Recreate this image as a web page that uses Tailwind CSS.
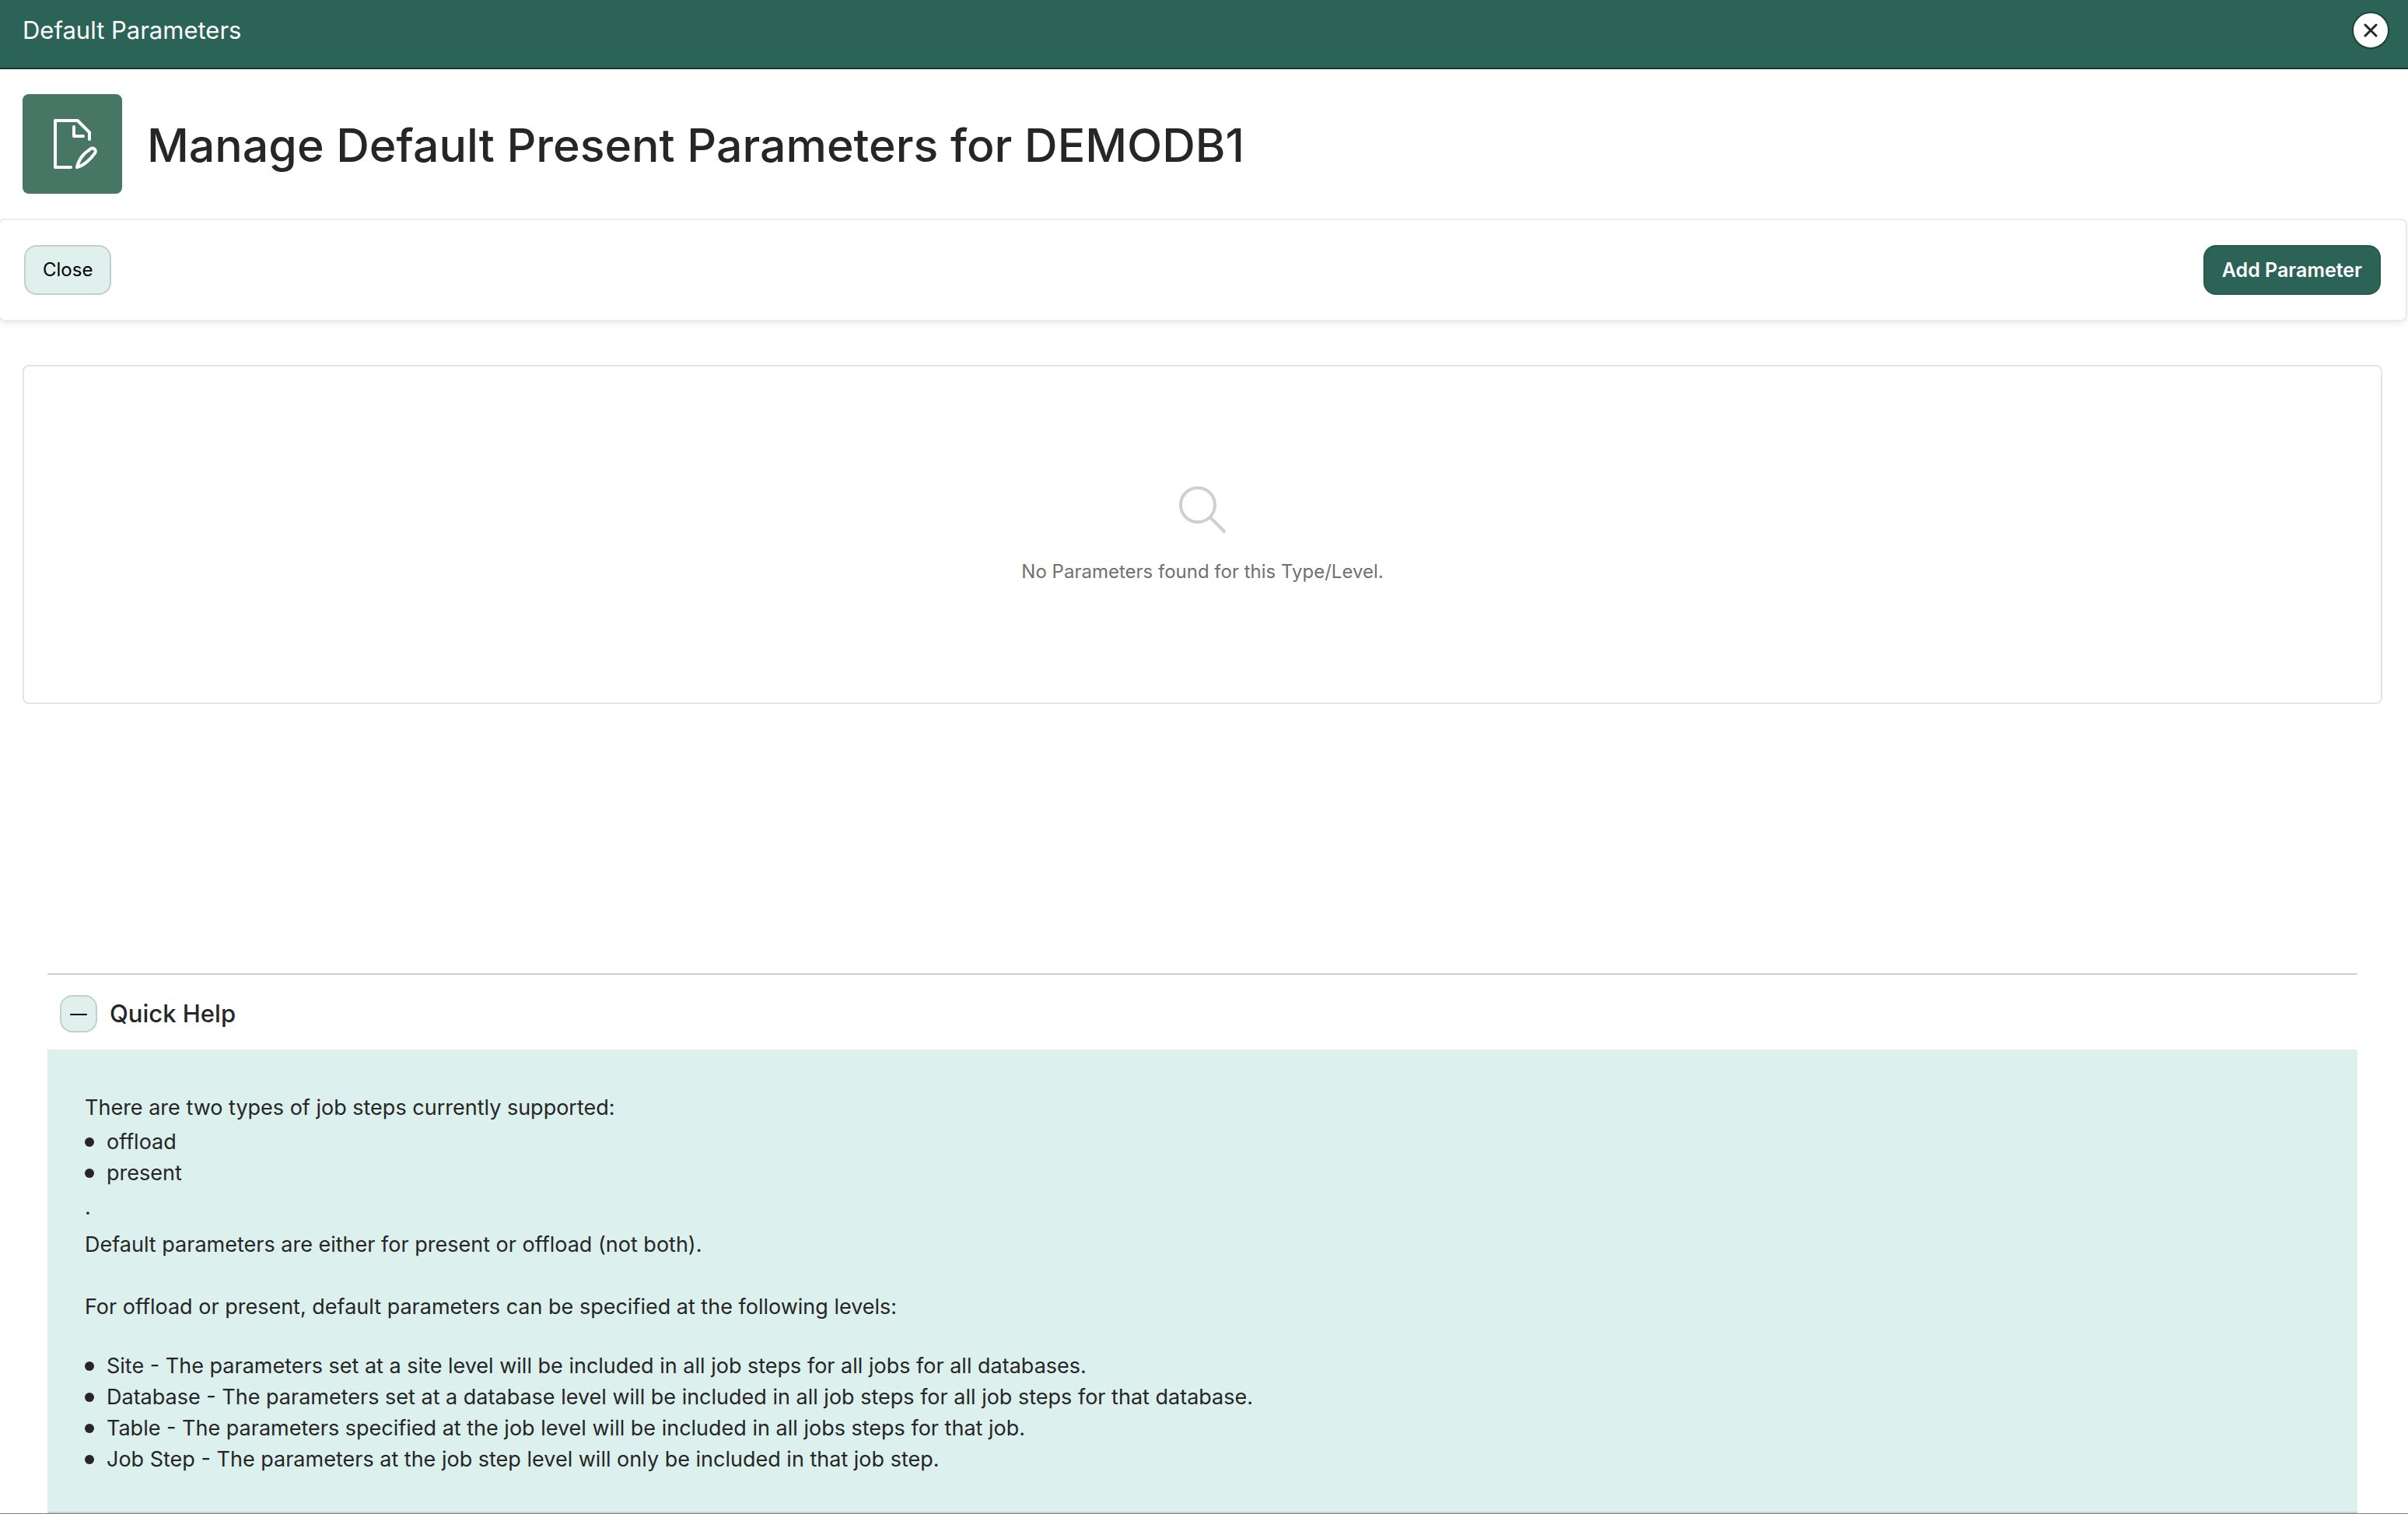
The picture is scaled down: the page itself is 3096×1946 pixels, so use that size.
<!DOCTYPE html>
<html lang="en">
<head>
<meta charset="utf-8">
<title>Default Parameters</title>
<script src="https://cdn.jsdelivr.net/npm/@tailwindcss/browser@4"></script>
</head>
<body class="bg-white text-[#262626] font-['Inter','Liberation_Sans',sans-serif] text-[27px] leading-10">
<div role="dialog" aria-labelledby="dialog-title" class="flex min-h-screen flex-col border-b border-[#7d7d7d]">
  <header class="flex items-start justify-between border-b-2 border-[#16362e] bg-[#2b6456] pt-[15px] pr-6 pb-6 pl-[29px] text-white">
    <h2 id="dialog-title" class="text-[31px] leading-12">Default Parameters</h2>
    <button type="button" aria-label="Close dialog" class="flex size-12 items-center justify-center rounded-full border-2 border-[#1b4238] bg-white text-[#262626]">
      <svg class="size-[18px]" viewBox="0 0 18 18" fill="none" stroke="currentColor" stroke-width="3" stroke-linecap="round"><path d="M2 2 16 16M16 2 2 16"/></svg>
    </button>
  </header>

  <div class="flex items-center gap-8 px-[29px] py-8">
    <div class="flex size-32 items-center justify-center rounded-lg bg-[#477665] text-white">
      <svg class="size-16" viewBox="0 0 16 16" fill="none" stroke="currentColor" stroke-linecap="round" stroke-linejoin="round"><path d="M7.500 15.500H2.500V.500H9.700L13.500 4.300V6.500M8.500 2.500V5.500H11.500"/><path d="M9.500 15.500C9.900 13.600 10.800 12.200 12 11L13.700 9.700A.85.85 0 0 1 15.200 11L13.900 12.600C12.700 13.900 11.400 15 9.500 15.500Z"/></svg>
    </div>
    <h1 class="pt-1 text-[59px] leading-20 font-medium">Manage Default Present Parameters for DEMODB1</h1>
  </div>

  <div class="mr-[1px] -ml-[2px] flex items-center justify-between rounded-lg border-2 border-[#ebebeb] py-8 pr-8 pl-[31px] shadow-[0_4px_8px_-2px_rgba(0,0,0,0.1)]">
    <button type="button" class="h-16 rounded-2xl border-2 border-[#c0d0cd] bg-[#e0f0ed] px-[22px] text-[24px] leading-8 text-black">Close</button>
    <button type="button" class="h-16 rounded-2xl border-2 border-[#27594d] bg-[#2b6456] px-[22px] text-[25px] leading-8 font-semibold text-white">Add Parameter</button>
  </div>

  <section class="mt-14 mr-[33px] ml-[29px] flex flex-col items-center rounded-lg border-2 border-[#e4e4e4] pt-[150px] pb-[148px] text-[24px] text-[#707070]">
    <svg class="size-16 text-[#cfcfcf]" viewBox="0 0 64 64" fill="none" stroke="currentColor" stroke-width="4" stroke-linecap="round"><circle cx="26" cy="28" r="22"/><path d="M42 44 60 62"/></svg>
    <p class="mt-[30px]">No Parameters found for this Type/Level.</p>
  </section>

  <section class="mt-[346px] mr-[65px] ml-[61px] flex grow flex-col border-y-2 border-[#c4d5d2] text-[#262626]">
    <div class="flex items-center gap-4 px-4 pt-[26px] pb-[22px]">
      <button type="button" aria-label="Collapse Quick Help" aria-expanded="true" aria-controls="quick-help" class="flex size-12 items-center justify-center rounded-2xl border-2 border-[#c0d0cd] bg-[#e0f0ed] text-black">
        <svg class="size-6" viewBox="0 0 24 24" fill="none" stroke="currentColor" stroke-width="2" stroke-linecap="round"><path d="M2 13H22"/></svg>
      </button>
      <h2 class="text-[31px] leading-12 font-medium">Quick Help</h2>
    </div>
    <div id="quick-help" class="grow border-t-2 border-[#e9ebea] bg-[#dcf0ed] px-12 pt-[53px] pb-[46px]">
      <p>There are two types of job steps currently supported:</p>
      <ul class="mt-1">
        <li class="flex items-center before:mr-4 before:size-3 before:rounded-full before:bg-[#262626]">offload</li>
        <li class="flex items-center before:mr-4 before:size-3 before:rounded-full before:bg-[#262626]">present</li>
      </ul>
      <p class="mt-1">.</p>
      <p class="mt-2">Default parameters are either for present or offload (not both).</p>
      <p class="mt-10">For offload or present, default parameters can be specified at the following levels:</p>
      <ul class="mt-9">
        <li class="flex items-center before:mr-4 before:size-3 before:rounded-full before:bg-[#262626]">Site - The parameters set at a site level will be included in all job steps for all jobs for all databases.</li>
        <li class="flex items-center before:mr-4 before:size-3 before:rounded-full before:bg-[#262626]">Database - The parameters set at a database level will be included in all job steps for all job steps for that database.</li>
        <li class="flex items-center before:mr-4 before:size-3 before:rounded-full before:bg-[#262626]">Table - The parameters specified at the job level will be included in all jobs steps for that job.</li>
        <li class="flex items-center before:mr-4 before:size-3 before:rounded-full before:bg-[#262626]">Job Step - The parameters at the job step level will only be included in that job step.</li>
      </ul>
    </div>
  </section>
</div>
</body>
</html>
